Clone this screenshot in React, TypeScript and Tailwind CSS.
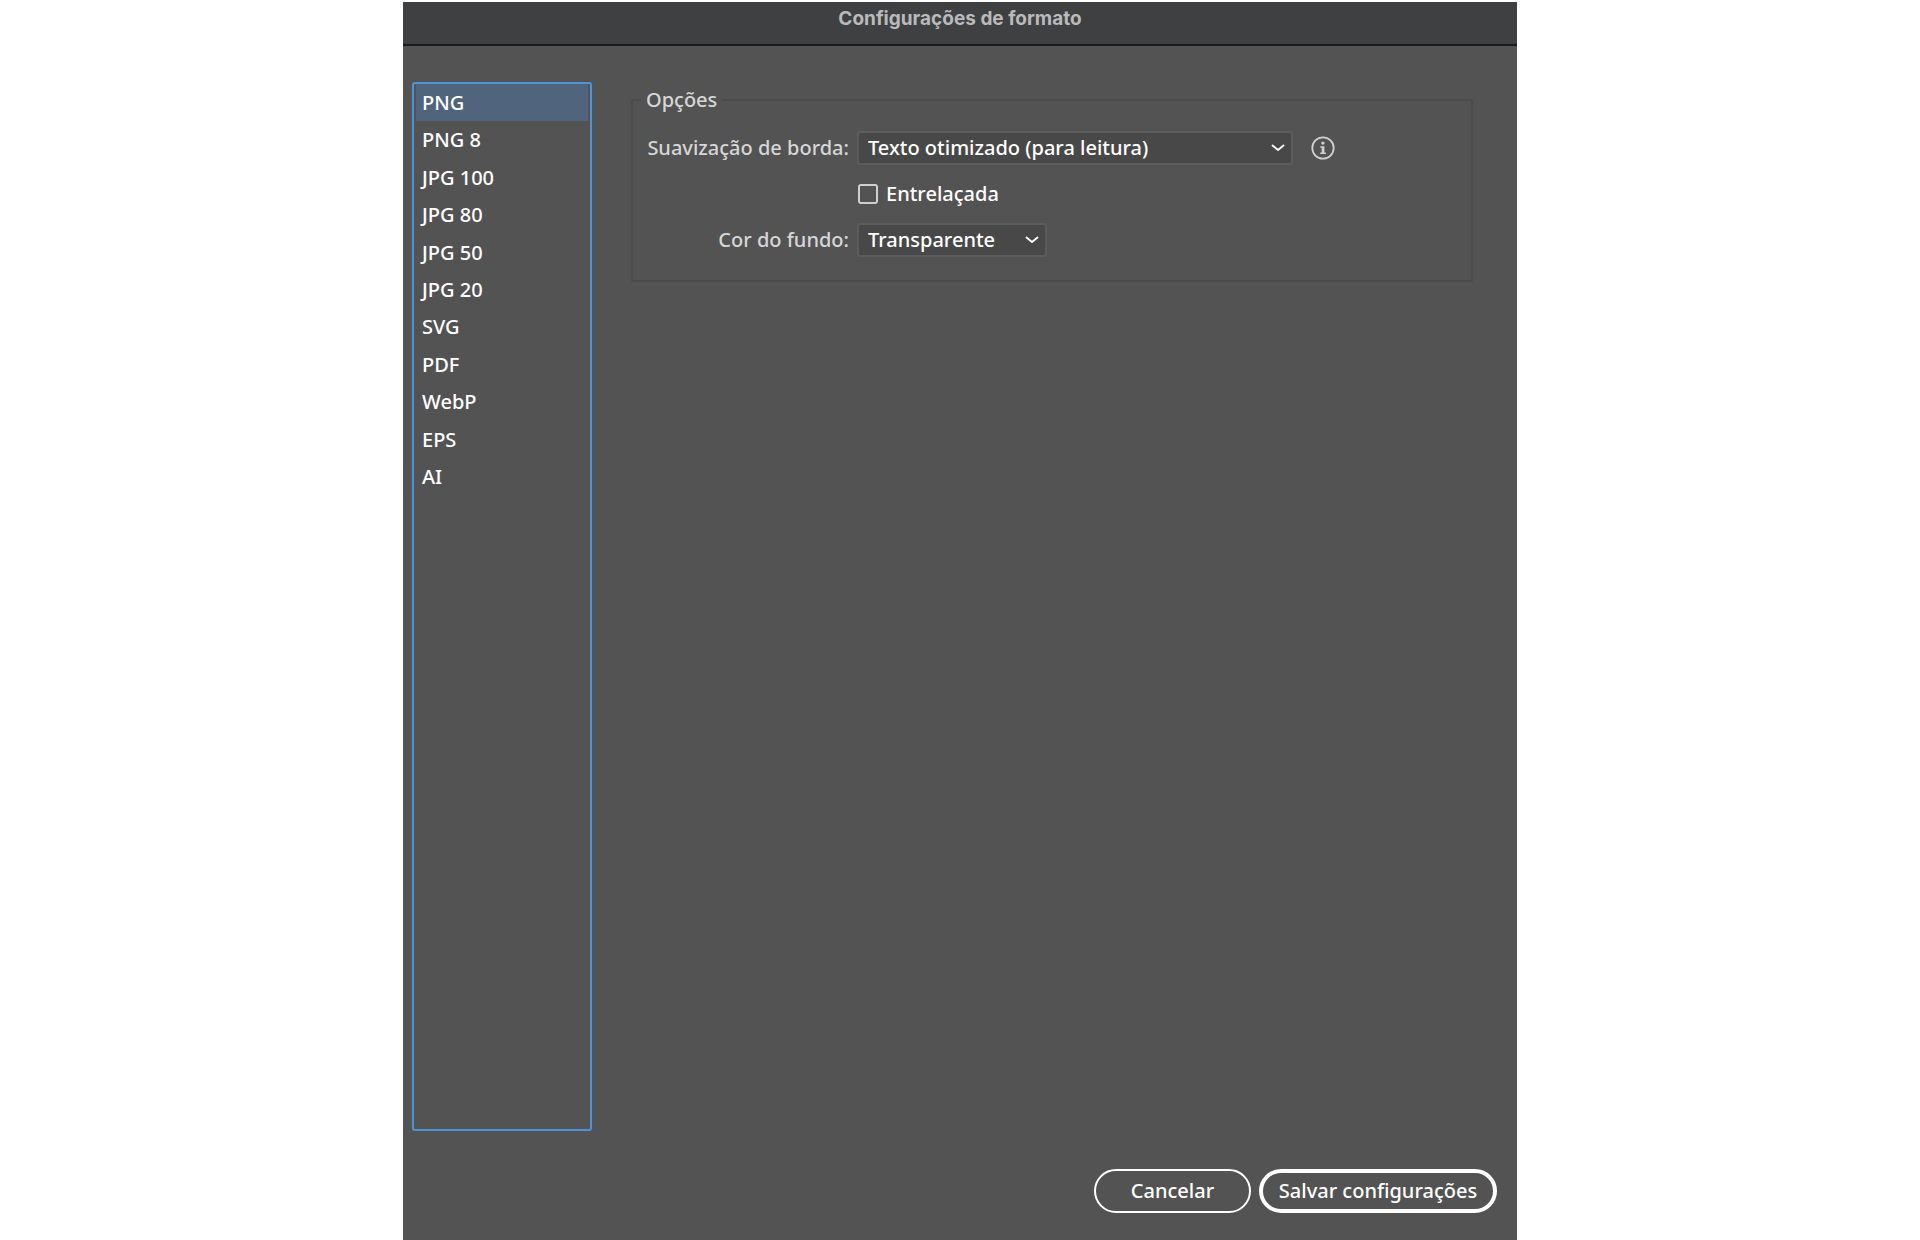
import React, { useState } from 'react';
import clsx from 'clsx';

const formats = ['PNG', 'PNG 8', 'JPG 100', 'JPG 80', 'JPG 50', 'JPG 20', 'SVG', 'PDF', 'WebP', 'EPS', 'AI'];

interface SelectFieldProps {
  id: string;
  options: string[];
  className?: string;
}

function SelectField({ id, options, className }: SelectFieldProps) {
  return (
    <div className={clsx('relative', className)}>
      <select
        id={id}
        className="block h-[34px] w-full appearance-none rounded-[3px] border-2 border-[#5c5c5c] bg-[#484848] pr-8 pl-[9px] font-medium text-white outline-none"
      >
        {options.map((option) => (
          <option key={option}>{option}</option>
        ))}
      </select>
      <svg
        className="pointer-events-none absolute top-[13px] right-2 h-2 w-[14px]"
        viewBox="0 0 14 8"
        fill="none"
        stroke="#fff"
        strokeWidth="1.8"
        strokeLinecap="round"
        strokeLinejoin="round"
      >
        <path d="M1.500 1.500 7 6l5.500-4.500" />
      </svg>
    </div>
  );
}

function InfoIcon() {
  return (
    <svg className="size-6" viewBox="0 0 24 24" fill="none">
      <circle cx="12" cy="12" r="10.7" stroke="#d0d0d0" strokeWidth="1.8" />
      <circle cx="11.9" cy="7.1" r="1.7" fill="#d0d0d0" />
      <path d="M9.3 10.2h4.1v6.300h1.500v1.600H9.200v-1.600h1.500v-4.700H9.300z" fill="#d0d0d0" />
    </svg>
  );
}

export default function App() {
  const [selected, setSelected] = useState('PNG');
  const [interlaced, setInterlaced] = useState(false);

  return (
    <div className="min-h-screen bg-white pt-[2px] font-['Noto_Sans','Open_Sans',sans-serif] text-[20px] leading-7">
      <main className="mx-auto flex min-h-[calc(100vh-2px)] w-full max-w-[1114px] flex-col bg-[#535353]">
        <header className="border-b-2 border-[#1b1c1e] bg-[#3f4042] pt-[3px] pb-[11px]">
          <h1 className="text-center font-['Inter',sans-serif] text-[19px] font-bold text-[#b9babb]">
            Configurações de formato
          </h1>
        </header>

        <div className="flex flex-1 items-stretch pt-9 pr-11 pl-[9px]">
          {/* Format list */}
          <nav className="w-[180px] shrink-0 rounded-[3px] border-2 border-[#4f94d8] px-[2px]">
            <ul className="grid h-[412px] auto-rows-fr">
              {formats.map((format) => (
                <li key={format}>
                  <button
                    type="button"
                    onClick={() => setSelected(format)}
                    className={clsx(
                      'flex h-full w-full items-center pl-[6px] text-left font-medium text-white',
                      selected === format && 'bg-[#50657d]'
                    )}
                  >
                    {format}
                  </button>
                </li>
              ))}
            </ul>
          </nav>

          {/* Options of the selected format */}
          <fieldset className="mt-1 ml-[39px] min-w-0 flex-1 self-start border-2 border-[#4c4c4c] pb-[23px] pl-2">
            <legend className="px-[5px] font-medium text-[#d6d6d6]">Opções</legend>
            <div className="grid grid-cols-[208px_1fr] items-center gap-x-2 pt-[17px]">
              <label htmlFor="antialias" className="text-right font-medium whitespace-nowrap text-[#d6d6d6]">
                Suavização de borda:
              </label>
              <div className="flex items-center gap-[18px]">
                <SelectField
                  id="antialias"
                  className="w-[436px]"
                  options={['Texto otimizado (para leitura)', 'Arte otimizada (superamostragem)', 'Nenhum']}
                />
                <button type="button" aria-label="Informações">
                  <InfoIcon />
                </button>
              </div>

              <label className="col-start-2 my-[15px] flex items-center gap-2 font-medium text-white">
                <input
                  type="checkbox"
                  checked={interlaced}
                  onChange={(e) => setInterlaced(e.target.checked)}
                  className="ml-px size-5 appearance-none rounded-[3px] border-2 border-[#cfcfcf] checked:bg-[#4f94d8]"
                />
                Entrelaçada
              </label>

              <label htmlFor="background" className="text-right font-medium whitespace-nowrap text-[#d6d6d6]">
                Cor do fundo:
              </label>
              <SelectField id="background" className="w-[190px]" options={['Transparente', 'Branco', 'Preto']} />
            </div>
          </fieldset>
        </div>

        <footer className="flex justify-end gap-2 px-5 pt-[38px] pb-[27px]">
          <button type="button" className="h-11 w-[157px] rounded-full border-2 border-white font-medium text-white">
            Cancelar
          </button>
          <button type="button" className="h-11 w-[238px] rounded-full border-4 border-white font-medium whitespace-nowrap text-white">
            Salvar configurações
          </button>
        </footer>
      </main>
    </div>
  );
}
